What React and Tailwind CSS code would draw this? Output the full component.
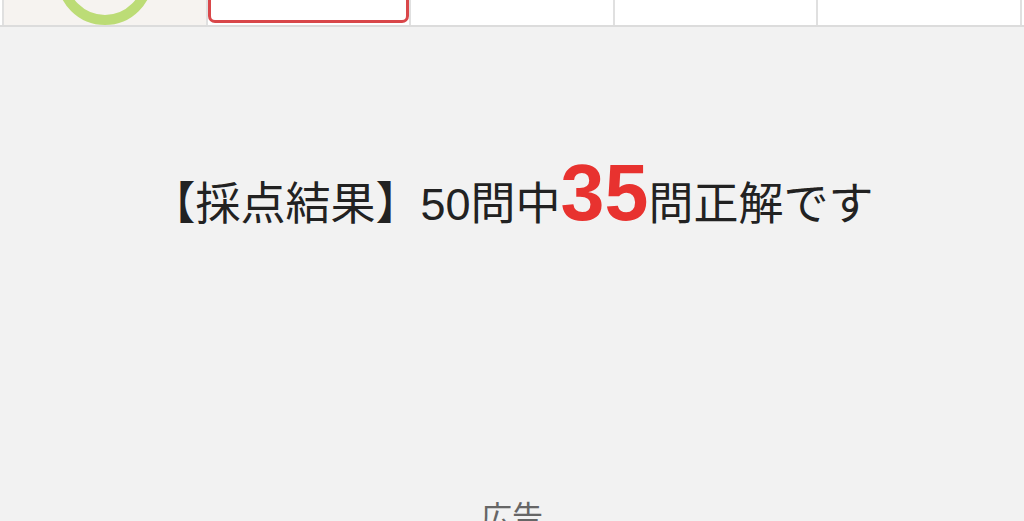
export default function App() {
    const cells = [0, 1, 2, 3, 4];
    return (
        <div className="w-[1024px] h-[521px] bg-[#f2f2f2] overflow-hidden flex flex-col" style={{ fontFamily: '"Helvetica Neue", "Liberation Sans", "Noto Sans CJK JP", sans-serif' }}>
            {/* answer sheet row (scrolled, only bottom visible) */}
            <div className="flex h-[27px] pl-[2px] pr-[2px] border-b-2 border-[#dcdcdc] bg-white">
                {cells.map(i => (
                    <div key={i}
                        className={`relative flex-1 h-full overflow-hidden border-r-2 border-[#e0e0e0] ${i === 0 ? 'bg-[#f6f3f0] border-l-2' : 'bg-white'}`}>
                        {i === 0 && (
                            <svg className="absolute left-0 top-0" width="203" height="26" viewBox="0 0 203 26">
                                <circle cx="101" cy="-23" r="43" fill="none" stroke="#bcdc76" strokeWidth="10" />
                            </svg>
                        )}
                        {i === 1 && (
                            <div className="absolute left-0 right-0 top-[-10px] bottom-[2px] border-[3px] border-[#d9474a] rounded-[7px]" />
                        )}
                    </div>
                ))}
            </div>

            <div className="flex-1 flex flex-col items-center">
                <div className="mt-[126px] flex items-baseline text-[#222] text-[45px] leading-none">
                    <span>【採点結果】50問中</span>
                    <span className="text-[#e8322f] font-bold text-[79px]">35</span>
                    <span>問正解です</span>
                </div>
                <div className="mt-auto mb-[-12px] text-[#666] text-[31px] leading-none">広告</div>
            </div>
        </div>
    );
}
